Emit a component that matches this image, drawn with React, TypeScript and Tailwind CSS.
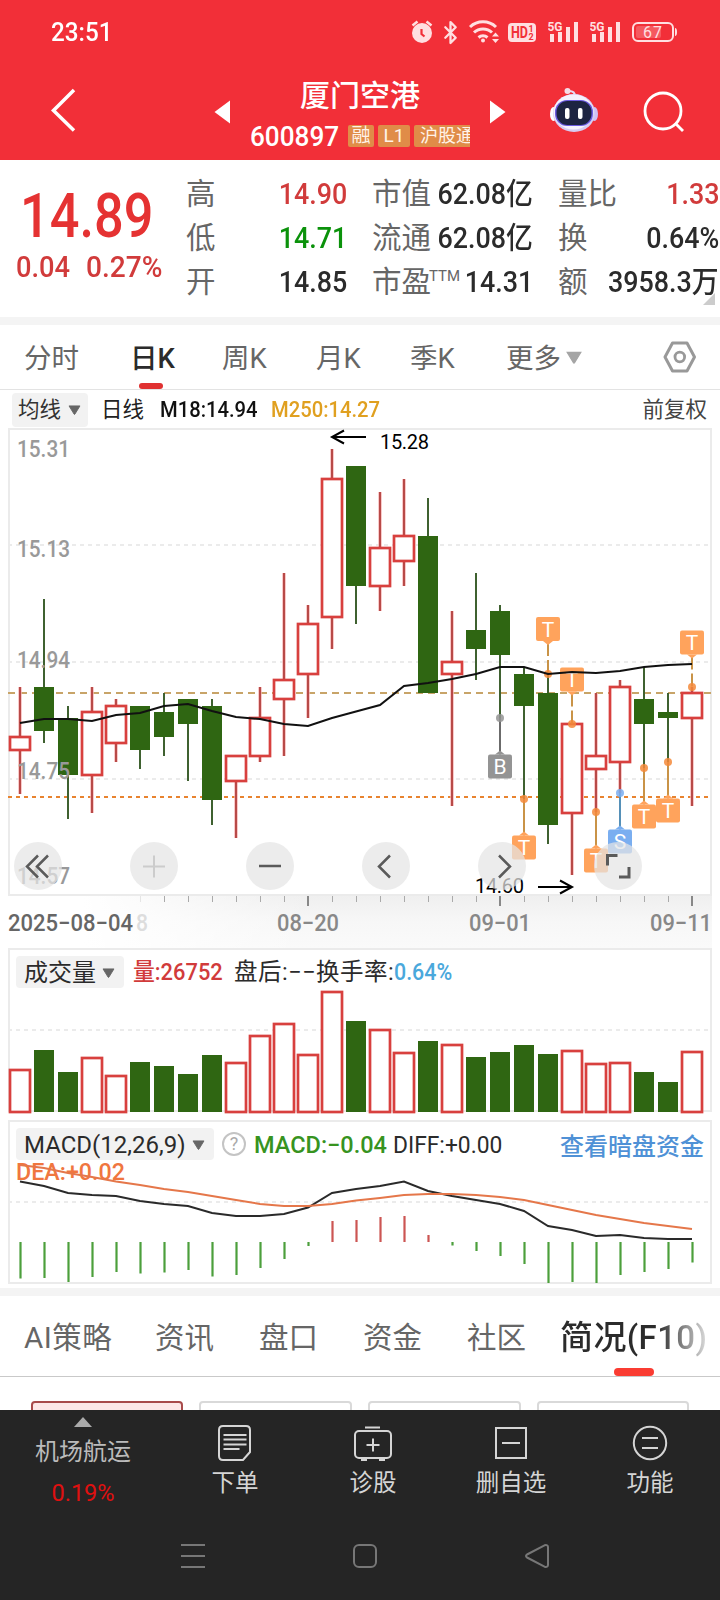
import { Bluetooth } from "lucide-react";

type Candle = [up: number, high: number, top: number, bottom: number, low: number];

const candles: Candle[] = [
  [1, 687, 736, 751, 794],
  [0, 599, 687, 731, 743],
  [0, 706, 718, 775, 819],
  [1, 687, 711, 776, 813],
  [1, 699, 705, 744, 762],
  [0, 706, 706, 750, 769],
  [0, 693, 712, 737, 756],
  [0, 699, 699, 724, 781],
  [0, 699, 706, 800, 825],
  [1, 755, 755, 782, 838],
  [1, 687, 717, 757, 762],
  [1, 573, 679, 700, 756],
  [1, 605, 623, 675, 718],
  [1, 449, 478, 618, 649],
  [0, 466, 466, 586, 624],
  [1, 492, 547, 587, 611],
  [1, 479, 535, 562, 586],
  [0, 498, 536, 693, 693],
  [1, 611, 661, 675, 806],
  [0, 573, 630, 649, 680],
  [0, 605, 611, 655, 718],
  [0, 668, 674, 706, 800],
  [0, 674, 693, 825, 844],
  [1, 723, 723, 814, 875],
  [1, 693, 755, 770, 812],
  [1, 680, 686, 763, 793],
  [0, 668, 699, 724, 768],
  [0, 693, 712, 718, 762],
  [1, 687, 692, 719, 806],
];

const ma18 = [723, 719, 719, 721, 715, 713, 706, 704, 711, 717, 719, 724, 726, 718, 711.5, 705, 686, 683, 679, 674, 667, 667, 674, 672, 673, 671, 667, 665, 664];

const volumes = [1069, 1050, 1072, 1057, 1075, 1062, 1066, 1074, 1055, 1062, 1035, 1023, 1054, 991, 1021, 1029, 1052, 1041, 1044, 1057, 1052, 1045, 1054, 1050, 1063, 1062, 1072, 1082, 1051];

const macd = [1278.5, 1278, 1282, 1277, 1272, 1273.5, 1272.5, 1270, 1276.5, 1275, 1268, 1259, 1246, 1221, 1220, 1217, 1216, 1235, 1245.5, 1251, 1256, 1264, 1283, 1282, 1283, 1275, 1272, 1269, 1262.5];
const diff = [1181.5, 1186, 1193, 1195, 1196, 1201, 1204, 1206, 1213, 1216, 1216, 1214, 1207.5, 1193, 1189, 1186, 1181.5, 1191, 1196, 1200, 1204, 1211, 1226, 1230, 1236, 1235, 1238, 1239, 1239];
const dea = [1165, 1168, 1173, 1177, 1181.5, 1185, 1189, 1192, 1196, 1200, 1204, 1206, 1206, 1204, 1200.5, 1198, 1195, 1194, 1194, 1195, 1197, 1200, 1205, 1210, 1215, 1219, 1223, 1226, 1229];

const cx = (i: number) => 20 + i * 24;
const line = (ys: number[]) => ys.map((y, i) => `${cx(i)},${y}`).join(" ");

const GREEN = "#2f6612";
const RED = "#d8403e";

// index, letter, dot y, box top, color
const markers: [number, string, number, number, string][] = [
  [22, "T", 674, 617, "#ffa35c"],
  [23, "T", 724, 667.5, "#ffa35c"],
  [28, "T", 687, 630.5, "#ffa35c"],
  [20, "B", 718, 754.5, "#949494"],
  [21, "T", 799, 835.5, "#ffa35c"],
  [24, "T", 812, 848.5, "#ffa35c"],
  [25, "S", 793, 829.5, "#7aaef0"],
  [26, "T", 768, 804.5, "#ffa35c"],
  [27, "T", 762, 798.5, "#ffa35c"],
];

function Marker({ i, letter, dot, top, color }: { i: number; letter: string; dot: number; top: number; color: string }) {
  const x = cx(i);
  const above = top < dot;
  const stem = letter === "B" ? "#6b6b6b" : letter === "S" ? "#5590b8" : "#c99347";
  return (
    <g>
      <line x1={x} x2={x} y1={above ? top + 26 : dot} y2={above ? dot : top} stroke={stem} strokeWidth="2" strokeDasharray={above ? "13 4" : undefined} />
      <circle cx={x} cy={dot} r="4" fill={letter === "T" ? "#f5893a" : color} opacity="0.85" />
      <rect x={x - 12} y={top} width="24" height="24" rx="2" fill={color} />
      <path d={above ? `M${x - 5} ${top + 24}h10l-5 4z` : `M${x - 5} ${top}h10l-5 -4z`} fill={color} />
      <text x={x} y={top + 19.5} textAnchor="middle" fontSize="21" fill="#fff">{letter}</text>
    </g>
  );
}

function StatusBar() {
  return (
    <div className="flex h-16 items-center justify-between pl-[51px] pr-[42px] text-white">
      <span className="inline-block origin-left scale-x-[0.97] text-[25px] font-medium leading-none">23:51</span>
      <div className="flex h-7 items-center text-[#ffdfe1]">
        <svg className="mr-[3px] h-7 w-7" viewBox="408 18 28 28" fill="none" stroke="currentColor">
          <circle cx="422" cy="33" r="10" fill="currentColor" stroke="none" />
          <path d="M412.5 25.5l5-4M431.500 25.5l-5-4" strokeWidth="2.5" />
          <path d="M421.500 29v5l3 2.500" stroke="#f22f38" strokeWidth="2.2" />
        </svg>
        <Bluetooth className="-ml-px mr-[5px] h-[25px] w-[25px]" strokeWidth={2.2} />
        <svg className="mr-2 h-7 w-8" viewBox="470 18 32 28" fill="none" stroke="currentColor" strokeWidth="3">
          <path d="M472 27a19 19 0 0 1 26 0M476 32.500a13 13 0 0 1 18 0M480.500 37.500a7 7 0 0 1 9 0" />
          <circle cx="485" cy="40.500" r="2" fill="currentColor" stroke="none" />
          <path d="M494 36.500l3.500-4 3.500 4zM494 39h7l-3.500 4z" fill="currentColor" stroke="none" />
        </svg>
        <svg className="mr-3 h-7 w-7" viewBox="510 18 28 28">
          <rect x="510" y="23" width="28" height="19" rx="4" fill="currentColor" />
          <text x="513" y="38" fontSize="16" fontWeight="700" fill="#f22f38" textLength="17" lengthAdjust="spacingAndGlyphs">HD</text>
          <text x="530.500" y="32" fontSize="9" fontWeight="700" fill="#f22f38">1</text>
          <text x="530.500" y="40" fontSize="9" fontWeight="700" fill="#f22f38">2</text>
        </svg>
        {[0, 1].map((n) => (
          <svg key={n} className="mr-2.5 h-7 w-8" viewBox="550 18 32 28" fill="currentColor">
            <text x="549.500" y="31" fontSize="13.500" fontWeight="700" textLength="15" lengthAdjust="spacingAndGlyphs">5G</text>
            <path d="M552 34h4v8h-4zM560 32h4v10h-4zM568 27h4v15h-4zM576 22h4v20h-4z" />
          </svg>
        ))}
        <svg className="-ml-px h-7 w-[47px]" viewBox="632 18 47 28">
          <rect x="634" y="23" width="40" height="18" rx="5" fill="none" stroke="currentColor" strokeWidth="2" />
          <rect x="637" y="26" width="25" height="12" rx="2" fill="#f5595f" />
          <path d="M676 28q2 0 2 4t-2 4z" fill="currentColor" />
          <text x="644" y="38" fontSize="16" fill="currentColor" textLength="19">67</text>
        </svg>
      </div>
    </div>
  );
}

function TitleBar() {
  return (
    <div className="flex h-24 items-start text-white">
      <svg className="ml-[48px] mt-[23px] h-[46px] w-7" viewBox="48 87 28 46" fill="none" stroke="#fff" strokeWidth="3.500">
        <path d="M74 90L53.500 110.500 74 130.500" />
      </svg>
      <svg className="ml-[138px] mt-9 h-6 w-4" viewBox="214 100 16 24"><path d="M214.500 112L230 100.500v23z" fill="#fff" /></svg>
      <div className="ml-5 mt-[16px] w-[220px]">
        <div className="pl-[50px] text-[30px] font-medium leading-[32px]">厦门空港</div>
        <div className="mt-[10px] flex h-[28px] items-center">
          <span className="inline-block w-[98px] origin-left translate-y-px scale-x-[0.95] text-[27.500px] font-medium leading-[28px]">600897</span>
          <div className="flex gap-1 text-[19px] leading-[22px] text-[#fff3e8]">
            <span className="w-[26px] rounded-xs bg-[#e08c48] text-center">融</span>
            <span className="w-8 rounded-xs bg-[#e08c48] text-center">L1</span>
            <span className="w-14 overflow-hidden rounded-l-xs bg-[#e08c48] pl-1.5 text-[18px] whitespace-nowrap">沪股通</span>
          </div>
        </div>
      </div>
      <svg className="ml-5 mt-9 h-6 w-4" viewBox="490 100 16 24"><path d="M505.500 112L490 100.500v23z" fill="#fff" /></svg>
      <svg className="ml-[43px] mt-[22px] h-12 w-[50px]" viewBox="549 86 50 48">
        <path d="M575 96q0-5-6-5" fill="none" stroke="#e6dcf5" strokeWidth="2" />
        <circle cx="567.500" cy="91" r="3" fill="#f5dce6" />
        <ellipse cx="553.500" cy="114" rx="3.500" ry="7" fill="#fff" />
        <ellipse cx="594.500" cy="114" rx="3.500" ry="7" fill="#cfc0f5" />
        <ellipse cx="574" cy="113" rx="21" ry="19" fill="#d6ccf2" />
        <ellipse cx="573.500" cy="112" rx="20" ry="17.500" fill="#f5f2fd" />
        <rect x="555" y="100" width="38" height="26" rx="12" fill="#6b5be0" />
        <rect x="556.500" y="101" width="35" height="24" rx="11" fill="#1d2442" />
        <rect x="565" y="108" width="4.500" height="11" rx="2" fill="#fff" />
        <rect x="578" y="108" width="4.500" height="11" rx="2" fill="#fff" />
      </svg>
      <svg className="ml-[43px] mt-[26px] h-11 w-11" viewBox="642 90 44 44" fill="none" stroke="#fff" strokeWidth="2.800">
        <circle cx="663" cy="111" r="18" />
        <path d="M675 123l8 8" />
      </svg>
    </div>
  );
}

const quotes = [
  ["高", "14.90", "text-[#d13b3b]"],
  ["市值", "62.08亿", "text-[#2b2b2b]"],
  ["量比", "1.33", "text-[#d13b3b]"],
  ["低", "14.71", "text-[#0b920b]"],
  ["流通", "62.08亿", "text-[#2b2b2b]"],
  ["换", "0.64%", "text-[#2b2b2b]"],
  ["开", "14.85", "text-[#2b2b2b]"],
  ["市盈", "14.31", "text-[#2b2b2b]"],
  ["额", "3958.3万", "text-[#2b2b2b]"],
];

function Quote() {
  return (
    <div className="relative flex h-[157px] bg-white">
      <div className="w-[186px] shrink-0 pt-[25px] text-[#e53232]">
        <div className="origin-left translate-x-[20px] scale-x-[0.85] text-[61.500px] font-medium leading-[62px]">14.89</div>
        <div className="mt-[5px] flex pl-[16px] text-[29px] leading-[30px] text-[#d13b3b]">
          <span className="inline-block w-[70px] origin-left scale-x-[0.94] font-medium">0.04</span>
          <span className="inline-block origin-left scale-x-[0.97] font-medium">0.27%</span>
        </div>
      </div>
      <div className="grid h-[144px] w-[534px] grid-cols-[161px_161px_161px] grid-rows-3 gap-x-[25px] pt-[12px]">
        {quotes.map(([label, value, color]) => (
          <div key={label} className="flex h-11 items-center justify-between whitespace-nowrap">
            <span className="flex w-0 items-start text-[29.500px] leading-[44px] text-[#666]">
              {label}
              {label === "市盈" && <sup className="top-0 -ml-0.5 text-[15px] leading-[32px]">TTM</sup>}
            </span>
            <span className={`inline-block origin-right scale-x-[0.91] text-[29.500px] font-medium leading-[44px] ${color}`}>{value}</span>
          </div>
        ))}
      </div>
      <svg className="absolute bottom-3 right-[5px] h-3 w-3" viewBox="0 0 12 12"><path d="M12 0v12H0z" fill="#ccc" /></svg>
    </div>
  );
}

function Caret({ className }: { className: string }) {
  return (
    <svg className={className} viewBox="0 0 14 11"><path d="M1 1h12L7.500 10q-.5.800-1 0z" fill="currentColor" stroke="currentColor" /></svg>
  );
}

function PeriodTabs() {
  return (
    <div className="flex h-[65px] items-center border-b border-[#e3e3e3] bg-white pt-[3px] text-[27.500px] text-[#666]">
      <span className="ml-6 w-[106px]">分时</span>
      <span className="relative w-[92px] font-medium text-[#2b2b2b]">
        日K
        <i className="absolute -bottom-[10px] left-[9px] h-[6px] w-6 rounded-full bg-[#e03131]" />
      </span>
      <span className="w-[94px]">周K</span>
      <span className="w-[94px]">月K</span>
      <span className="w-[96px]">季K</span>
      <span>更多</span>
      <Caret className="-mt-[3px] ml-[5px] h-[13px] w-4 text-[#a5a5a5]" />
      <svg className="-mt-[3px] ml-[81px] h-8 w-[34px]" viewBox="0 0 34 32" fill="none" stroke="#999" strokeWidth="3" strokeLinejoin="round">
        <path d="M9.500 2h14.500l7.500 14-7.500 14H9.500L2 16z" />
        <circle cx="16.800" cy="16" r="4.800" strokeWidth="2.800" />
      </svg>
    </div>
  );
}

function MaRow() {
  return (
    <div className="flex h-[38px] items-center whitespace-nowrap bg-white pt-[2px] text-[21.500px]">
      <div className="ml-3 flex h-[34px] w-[76px] items-center justify-between rounded bg-[#f2f2f2] pl-1.5 pr-[7px] text-[#333]">
        均线
        <Caret className="h-[10px] w-[13px] text-[#666]" />
      </div>
      <span className="ml-[13px] w-[59px] text-[#222]">日线</span>
      <span className="inline-block w-[111px] origin-left scale-x-[0.94] text-[21.500px] font-medium text-[#111]">M18:14.94</span>
      <span className="inline-block origin-left scale-x-[0.94] text-[21.500px] font-medium text-[#e0a020]">M250:14.27</span>
      <span className="ml-auto mr-[13px] text-[#444]">前复权</span>
    </div>
  );
}

function KLineChart() {
  return (
    <svg className="block h-[520px] w-[720px]" viewBox="0 428 720 520">
      <defs>
        <linearGradient id="axis" x1="0" y1="0" x2="0" y2="1">
          <stop offset="0" stopColor="#efefef" />
          <stop offset="0.500" stopColor="#f7f7f7" />
          <stop offset="1" stopColor="#fafafa" />
        </linearGradient>
        <linearGradient id="fade" x1="0" y1="0" x2="1" y2="0">
          <stop offset="0.250" stopColor="#fff" />
          <stop offset="1" stopColor="#fff" stopOpacity="0" />
        </linearGradient>
      </defs>
      <rect x="9" y="429" width="702" height="466" fill="#fff" stroke="#ebebeb" strokeWidth="2" />
      {[545, 662, 779].map((y) => (
        <line key={y} x1="8" x2="709" y1={y} y2={y} stroke="#ebebeb" strokeWidth="2" strokeDasharray="4 4" />
      ))}
      <line x1="8" x2="711" y1="693" y2="693" stroke="#c8a468" strokeWidth="2" strokeDasharray="7 5" />
      <line x1="8" x2="709" y1="797" y2="797" stroke="#e8832f" strokeWidth="2" strokeDasharray="4 4" />

      {candles.map(([up, high, top, bottom, low], i) => (
        <g key={i}>
          {up ? (
            <>
              <path d={`M${cx(i)} ${high}V${top}M${cx(i)} ${bottom}V${low}`} stroke="#f7b5b5" strokeWidth="4" opacity="0.700" />
              <path d={`M${cx(i)} ${high}V${top}M${cx(i)} ${bottom}V${low}`} stroke="#b84a48" strokeWidth="2" />
              <rect x={cx(i) - 10} y={top + 1} width="20" height={bottom - top - 2} fill="#fff" stroke={RED} strokeWidth="2.700" />
            </>
          ) : (
            <>
              <line x1={cx(i)} x2={cx(i)} y1={high} y2={low} stroke="#3f6130" strokeWidth="2" />
              <rect x={cx(i) - 10} y={top} width="20" height={bottom - top} fill={GREEN} />
            </>
          )}
        </g>
      ))}

      {markers.map(([i, letter, dot, top, color]) => (
        <Marker key={i} i={i} letter={letter} dot={dot} top={top} color={color} />
      ))}
      <polyline points={line(ma18)} fill="none" stroke="#111" strokeWidth="2" />

      <g fill="#999" fontSize="24" fontWeight="500">
        {[["15.31", 457], ["15.13", 557], ["14.94", 668], ["14.75", 779], ["14.57", 884]].map(([t, y]) => (
          <text key={t} x="17" y={y} textLength="53" lengthAdjust="spacingAndGlyphs">{t}</text>
        ))}
      </g>

      <g fontSize="20" fill="#000">
        <text x="380" y="449" textLength="49">15.28</text>
        <text x="475" y="892.500" textLength="49">14.60</text>
      </g>
      <g fill="none" stroke="#000" strokeWidth="2">
        <path d="M366 437h-34M344 430.500l-12 6.500 12 6.500" />
        <path d="M538 887h34M560 880.500l12 6.500-12 6.500" />
      </g>

      {/* time axis */}
      <rect x="8" y="896" width="704" height="52" fill="url(#axis)" />
      <rect x="8" y="896" width="300" height="52" fill="url(#fade)" />
      {candles.map((_, i) => i > 4 && (
        [12, 20, 28].includes(i)
          ? <line key={i} x1={cx(i)} x2={cx(i)} y1="896" y2="906" stroke="#888" strokeWidth="2" />
          : <line key={i} x1={cx(i) + 0.5} x2={cx(i) + 0.5} y1="896" y2="902" stroke={i === 5 ? "#e5e5e5" : "#aaa"} />
      ))}
      <g fontSize="24" fontWeight="500" fill="#888">
        <text x="136" y="931" fill="#ddd" textLength="12" lengthAdjust="spacingAndGlyphs">8</text>
        <text x="8" y="931" fill="#666" textLength="125" lengthAdjust="spacingAndGlyphs">2025−08−04</text>
        <text x="277" y="931" textLength="62" lengthAdjust="spacingAndGlyphs">08−20</text>
        <text x="469" y="931" textLength="62" lengthAdjust="spacingAndGlyphs">09−01</text>
        <text x="650" y="931" textLength="62" lengthAdjust="spacingAndGlyphs">09−11</text>
      </g>

      {/* floating chart controls */}
      {[38, 154, 270, 386, 502, 618].map((x) => (
        <circle key={x} cx={x} cy="866" r="24" fill="#e5e5e5" opacity="0.720" />
      ))}
      <g fill="none" stroke="#5a5a5a" strokeWidth="2.500">
        <path d="M38 855.500L27 866.500l11 11M48 855.500l-11 11 11 11" />
        <path d="M154 855.500v22M143 866.500h22" stroke="#ccc" strokeWidth="2" />
        <path d="M259 866h22" />
        <path d="M390 855.500l-11 11 11 11M499 855.500l11 11-11 11" />
        <path d="M607.500 865.500V855.500h10M629 867v10h-10" strokeWidth="3" />
      </g>
    </svg>
  );
}

function VolumeChart() {
  return (
    <div className="relative h-[172px]">
      <svg className="block h-[172px] w-[720px]" viewBox="0 948 720 172">
        <rect x="9" y="949" width="702" height="162" fill="#fff" stroke="#ebebeb" strokeWidth="2" />
        <line x1="8" x2="709" y1="1030" y2="1030" stroke="#ebebeb" strokeWidth="2" strokeDasharray="4 4" />
        {volumes.map((y, i) =>
          candles[i][0] ? (
            <rect key={i} x={cx(i) - 10} y={y + 1} width="20" height={1111 - y} fill="#fff" stroke={RED} strokeWidth="2.700" />
          ) : (
            <rect key={i} x={cx(i) - 10} y={y} width="20" height={1112 - y} fill={GREEN} />
          )
        )}
      </svg>
      <div className="absolute left-4 top-2 flex h-8 items-center whitespace-nowrap text-[23.500px] text-[#2b2b2b]">
        <div className="flex h-8 w-[108px] items-center justify-between rounded bg-[#f2f2f2] pl-2 pr-[9px] pt-[2px] text-[24px]">
          成交量
          <Caret className="h-[10px] w-[13px] text-[#666]" />
        </div>
        <span className="ml-[9px] inline-block w-[102px] origin-left translate-y-px scale-x-[0.93] font-medium text-[#d13b3b]">量:26752</span>
        <span className="-ml-px translate-y-px tracking-[0.5px]">盘后:−−换手率:</span>
        <span className="inline-block origin-left translate-y-px scale-x-[0.91] font-medium text-[#4aa8dc]">0.64%</span>
      </div>
    </div>
  );
}

function MacdChart() {
  return (
    <div className="relative h-[168px]">
      <svg className="block h-[168px] w-[720px]" viewBox="0 1120 720 168">
        <rect x="9" y="1121" width="702" height="162" fill="#fff" stroke="#ebebeb" strokeWidth="2" />
        <line x1="8" x2="709" y1="1202" y2="1202" stroke="#ebebeb" strokeWidth="2" strokeDasharray="4 4" />
        {macd.map((y, i) => (
          <line key={i} x1={cx(i) + 0.5} x2={cx(i) + 0.5} y1="1242" y2={y} stroke={y < 1242 ? "#cc5553" : "#4c9f3c"} strokeWidth="2.200" />
        ))}
        <text x="16" y="1180" fontSize="23.500" fontWeight="500" fill="#f0763f" textLength="109" lengthAdjust="spacingAndGlyphs">DEA:+0.02</text>
        <polyline points={line(diff)} fill="none" stroke="#2a2a2a" strokeWidth="2" />
        <polyline points={line(dea)} fill="none" stroke="#e5774a" strokeWidth="2" />
      </svg>
      <div className="absolute left-4 right-4 top-2 flex h-8 items-center whitespace-nowrap text-[24px] text-[#2b2b2b]">
        <div className="flex h-8 w-[198px] items-center rounded bg-[#f2f2f2] pl-2 pt-[2px]">
          <span className="inline-block w-[168px]">MACD(12,26,9)</span>
          <Caret className="h-[10px] w-[13px] shrink-0 text-[#666]" />
        </div>
        <span className="ml-2 mr-2 flex h-6 w-6 items-center justify-center rounded-full border-2 border-[#c4c4c4] text-[18px] leading-none text-[#aaa]">?</span>
        <span className="inline-block w-[139px] origin-left translate-y-px scale-x-[0.98] font-medium text-[#37931f]">MACD:−0.04</span>
        <span className="inline-block origin-left translate-y-px scale-x-[0.95]">DIFF:+0.00</span>
        <span className="absolute right-0 top-0 translate-y-px font-medium text-[#4f91d6]">查看暗盘资金</span>
      </div>
    </div>
  );
}

function InfoTabs() {
  return (
    <>
      <div className="flex h-[81px] items-center whitespace-nowrap border-b border-[#c9c9c9] bg-white text-[29.500px] text-[#666]">
        <span className="ml-6 w-[131px] pt-1 tracking-[0.5px]">AI策略</span>
        <span className="w-[104px] pt-1">资讯</span>
        <span className="w-[104px] pt-1">盘口</span>
        <span className="w-[104px] pt-1">资金</span>
        <span className="w-[93px] pt-1">社区</span>
        <span className="relative h-[81px] text-[33px] font-medium leading-[84px] tracking-[0.4px] text-[#2b2b2b]">
          <span className="bg-linear-to-r from-[#2b2b2b] from-65% to-[#ddd] bg-clip-text text-transparent">简况(F10)</span>
          <i className="absolute bottom-px left-[54px] h-2 w-10 rounded-full bg-[#fa3c32]" />
        </span>
      </div>
      <div className="flex h-[33px] gap-4 overflow-hidden bg-white pl-[31px] pt-6">
        <div className="h-16 w-[152px] shrink-0 rounded border-2 border-[#a84b4b] bg-[#fde8e8]" />
        <div className="h-16 w-[153px] shrink-0 rounded border-2 border-[#d9d9d9]" />
        <div className="h-16 w-[153px] shrink-0 rounded border-2 border-[#d9d9d9]" />
        <div className="h-16 w-[152px] shrink-0 rounded border-2 border-[#d9d9d9]" />
      </div>
    </>
  );
}

function BottomBar() {
  return (
    <div className="h-[190px] bg-[#252525] text-[#d5d5d5]">
      <div className="flex h-[110px] text-[23.500px]">
        <div className="flex w-[166px] flex-col items-center pt-[7px] text-[#bbb]">
          <svg className="h-[10px] w-[18px]" viewBox="0 0 18 10"><path d="M9 0l9 10H0z" fill="#aaa" /></svg>
          <span className="mt-3 text-[24px] leading-[27px]">机场航运</span>
          <span className="mt-[14px] inline-block leading-[26px] text-[#e01010]">0.19%</span>
        </div>
        <div className="flex w-[138px] flex-col items-center pt-[14px]">
          <svg className="h-[38px] w-9" viewBox="0 0 36 38" fill="none" stroke="#d5d5d5" strokeWidth="2">
            <path d="M6 2h23q4 0 4 4v22l-7 8H6q-4 0-4-4V6q0-4 4-4z" />
            <path d="M6.500 11h23M6.500 15.500h23M6.500 20.500h23M6.500 25h16" />
          </svg>
          <span className="mt-[6px] leading-[30px]">下单</span>
        </div>
        <div className="flex w-[138px] flex-col items-center pt-[14px]">
          <svg className="h-[38px] w-10" viewBox="0 0 40 38" fill="none" stroke="#d5d5d5" strokeWidth="2">
            <rect x="2" y="7" width="36" height="27" rx="4" />
            <path d="M12 3.500h15M20 14.500v13M13.500 21h13M8 36h6M26 36h6" />
          </svg>
          <span className="mt-[6px] leading-[30px]">诊股</span>
        </div>
        <div className="flex w-[138px] flex-col items-center pt-[14px]">
          <svg className="h-[38px] w-9" viewBox="0 0 36 38" fill="none" stroke="#d5d5d5" strokeWidth="2">
            <rect x="3" y="4" width="30" height="30" />
            <path d="M9 19h18" />
          </svg>
          <span className="mt-[6px] leading-[30px]">删自选</span>
        </div>
        <div className="flex w-[140px] flex-col items-center pt-[14px]">
          <svg className="h-[38px] w-9" viewBox="0 0 36 38" fill="none" stroke="#d5d5d5" strokeWidth="2">
            <circle cx="18" cy="19" r="16.200" />
            <path d="M10 14h16M10 24h16" />
          </svg>
          <span className="mt-[6px] leading-[30px]">功能</span>
        </div>
      </div>
      {/* system navigation */}
      <div className="flex h-[72px] items-center pl-[180px]">
        <svg className="h-6 w-[26px]" viewBox="0 0 26 24" stroke="#777" strokeWidth="2"><path d="M1 1h24M1 12h24M1 23h24" /></svg>
        <svg className="ml-[147px] h-6 w-6" viewBox="0 0 24 24" fill="none" stroke="#777" strokeWidth="2"><rect x="1" y="1" width="22" height="22" rx="5" /></svg>
        <svg className="ml-[148px] h-6 w-6" viewBox="0 0 24 24" fill="none" stroke="#777" strokeWidth="2" strokeLinejoin="round"><path d="M2 10.500L19.500 1.300Q23 .5 23 3v18q0 2.500-3.500 1.700L2 13.500q-2-1.500 0-3z" /></svg>
      </div>
    </div>
  );
}

export default function App() {
  return (
    <div className="h-[1600px] w-[720px] overflow-hidden bg-white font-['Roboto','Noto_Sans_CJK_SC',sans-serif]">
      <header className="h-40 bg-[#f22f38]">
        <StatusBar />
        <TitleBar />
      </header>
      <Quote />
      <div className="h-2 bg-[#f4f4f4]" />
      <PeriodTabs />
      <MaRow />
      <KLineChart />
      <VolumeChart />
      <MacdChart />
      <div className="h-2 bg-[#f4f4f4]" />
      <InfoTabs />
      <BottomBar />
    </div>
  );
}
